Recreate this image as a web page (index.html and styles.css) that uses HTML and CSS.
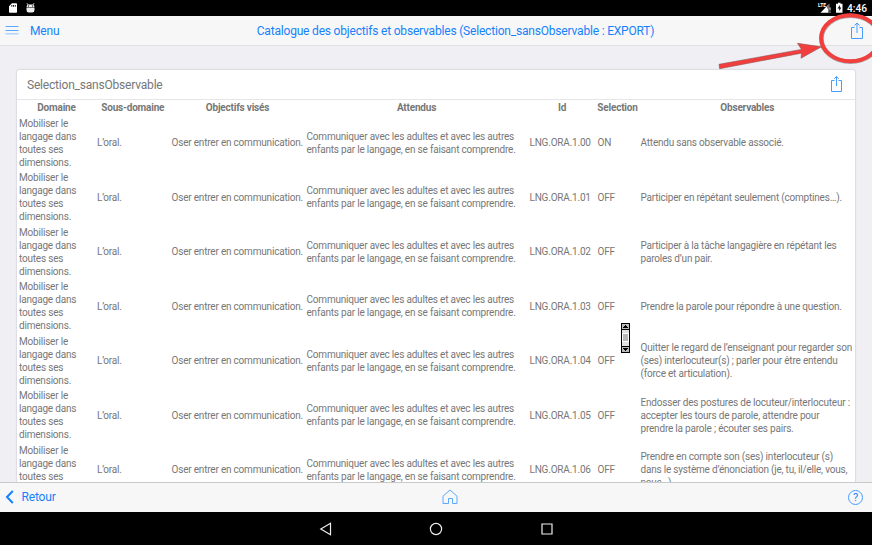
FILE: index.html
```
<!DOCTYPE html>
<html lang="fr">
<head>
<meta charset="utf-8">
<title>Catalogue des objectifs et observables</title>
<link rel="stylesheet" href="styles.css">
</head>
<body>
<div class="screen">
  <div class="status">
    <svg class="status-left" width="40" height="16" viewBox="0 0 40 16"><path fill="#fff" fill-rule="evenodd" d="M12 3.3h4.2q.8 0 .8.8v7.8q0 .8-.8.8H9.800q-.8 0-.8-.8V6.300zM11.400 5v1.800h.9V5zm1.700 0v1.800h.9V5zm1.700 0v1.800h.9V5z"/><path fill="#eee" fill-rule="evenodd" d="M27 3l1.400 1.400h4.200L34 3l.5.5-1.200 1.300q1.200.8 1.200 2.700h-8q0-1.900 1.200-2.700l-1.200-1.300zM28 5.500v1h1v-1zm4 0v1h1v-1zM26.500 8h8v2q0 2.500-2.300 2.500h-3.400q-2.300 0-2.300-2.500z"/></svg>
    <span class="lte">LTE</span>
    <svg class="status-right" width="24" height="16" viewBox="0 0 24 16"><path fill="#fff" d="M8.500 4.500V12.700H.5z"/><path fill="#777" d="M9.500 3.500v5H7v-2.500z"/><path stroke="#fff" d="M10 7.500v3m0 1v1.200"/><path fill="#fff" d="M16 3.800h2V2.700h2.500v1.100h2v8.900H16z"/><path fill="#000" d="M20 5l-2.500 3.500h1.800V11l2-3.400h-1.500z"/></svg>
    <span class="clock">4:46</span>
  </div>
  <header class="navbar">
    <svg class="menu-icon" width="14" height="10" viewBox="0 0 14 10"><path stroke="#5baaff" stroke-width="1" d="M.5 1.500h13M.5 5.500h13"/><path stroke="#a5d0ff" stroke-width="1.300" d="M.5 8.800h13"/></svg>
    <a class="menu">Menu</a>
    <h1 class="title">Catalogue des objectifs et observables (Selection_sansObservable : EXPORT)</h1>
    <svg class="share" width="14" height="18" viewBox="0 0 14 18"><path d="M4.500 5.500h-3v11h11v-11h-3M7 11V1M4.500 3.500L7 1l2.500 2.500"/></svg>
  </header>
  <main class="content">
    <section class="card">
      <div class="card-head"><h2>Selection_sansObservable</h2>
        <svg class="share share-card" width="14" height="18" viewBox="0 0 14 18"><path d="M4.500 5.500h-3v11h10v-11h-3M6.500 11V1.500M4.300 3.700L6.500 1.500l2.200 2.200"/></svg>
      </div>
      <div class="table">
        <div class="row head"><b class="c1">Domaine</b><b class="c2">Sous-domaine</b><b class="c3">Objectifs visés</b><b class="c4">Attendus</b><b class="c5">Id</b><b class="c6">Selection</b><b class="c7">Observables</b></div>
        <div class="row"><p class="c1">Mobiliser le<br>langage dans<br>toutes ses<br>dimensions.</p><p class="c2">L’oral.</p><p class="c3">Oser entrer en communication.</p><p class="c4">Communiquer avec les adultes et avec les autres<br>enfants par le langage, en se faisant comprendre.</p><p class="c5">LNG.ORA.1.00</p><p class="c6">ON</p><p class="c7">Attendu sans observable associé.</p></div>
        <div class="row"><p class="c1">Mobiliser le<br>langage dans<br>toutes ses<br>dimensions.</p><p class="c2">L’oral.</p><p class="c3">Oser entrer en communication.</p><p class="c4">Communiquer avec les adultes et avec les autres<br>enfants par le langage, en se faisant comprendre.</p><p class="c5">LNG.ORA.1.01</p><p class="c6">OFF</p><p class="c7">Participer en répétant seulement (comptines…).</p></div>
        <div class="row"><p class="c1">Mobiliser le<br>langage dans<br>toutes ses<br>dimensions.</p><p class="c2">L’oral.</p><p class="c3">Oser entrer en communication.</p><p class="c4">Communiquer avec les adultes et avec les autres<br>enfants par le langage, en se faisant comprendre.</p><p class="c5">LNG.ORA.1.02</p><p class="c6">OFF</p><p class="c7">Participer à la tâche langagière en répétant les<br>paroles d’un pair.</p></div>
        <div class="row"><p class="c1">Mobiliser le<br>langage dans<br>toutes ses<br>dimensions.</p><p class="c2">L’oral.</p><p class="c3">Oser entrer en communication.</p><p class="c4">Communiquer avec les adultes et avec les autres<br>enfants par le langage, en se faisant comprendre.</p><p class="c5">LNG.ORA.1.03</p><p class="c6">OFF</p><p class="c7">Prendre la parole pour répondre à une question.</p></div>
        <div class="row"><p class="c1">Mobiliser le<br>langage dans<br>toutes ses<br>dimensions.</p><p class="c2">L’oral.</p><p class="c3">Oser entrer en communication.</p><p class="c4">Communiquer avec les adultes et avec les autres<br>enfants par le langage, en se faisant comprendre.</p><p class="c5">LNG.ORA.1.04</p><p class="c6">OFF</p><p class="c7">Quitter le regard de l’enseignant pour regarder son<br>(ses) interlocuteur(s) ; parler pour être entendu<br>(force et articulation).</p></div>
        <div class="row"><p class="c1">Mobiliser le<br>langage dans<br>toutes ses<br>dimensions.</p><p class="c2">L’oral.</p><p class="c3">Oser entrer en communication.</p><p class="c4">Communiquer avec les adultes et avec les autres<br>enfants par le langage, en se faisant comprendre.</p><p class="c5">LNG.ORA.1.05</p><p class="c6">OFF</p><p class="c7">Endosser des postures de locuteur/interlocuteur :<br>accepter les tours de parole, attendre pour<br>prendre la parole ; écouter ses pairs.</p></div>
        <div class="row"><p class="c1">Mobiliser le<br>langage dans<br>toutes ses<br>dimensions.</p><p class="c2">L’oral.</p><p class="c3">Oser entrer en communication.</p><p class="c4">Communiquer avec les adultes et avec les autres<br>enfants par le langage, en se faisant comprendre.</p><p class="c5">LNG.ORA.1.06</p><p class="c6">OFF</p><p class="c7">Prendre en compte son (ses) interlocuteur (s)<br>dans le système d’énonciation (je, tu, il/elle, vous,<br>nous…).</p></div>
      </div>
    </section>
  </main>
  <footer class="toolbar">
    <div class="back"><svg width="10" height="14" viewBox="0 0 10 14"><path fill="none" stroke="#1680fb" stroke-width="2" d="M7.800 1L2 7l5.800 6"/></svg><span>Retour</span></div>
    <svg class="home" width="16" height="16" viewBox="0 0 16 16"><path fill="none" stroke="#5baaff" d="M1 14.500V7.200L8 1l7 6.200v7.300h-4.500V9.500h-4v5z"/></svg>
    <span class="help">?</span>
  </footer>
  <nav class="android">
    <svg width="14" height="14" viewBox="0 0 14 14"><path d="M11.500 1.300v11.400L1.800 7z"/></svg>
    <svg width="14" height="14" viewBox="0 0 14 14"><circle cx="7" cy="7" r="5.600"/></svg>
    <svg width="14" height="14" viewBox="0 0 14 14"><path d="M2 2h10v10H2z"/></svg>
  </nav>
  <svg class="scroller" width="9" height="30" viewBox="0 0 9 30" shape-rendering="crispEdges"><path d="M0 0h9v30H0z"/><path fill="#bbb" d="M1 1h7v5H1zM1 24h7v5H1z"/><path fill="#e2e2e2" d="M1 7h7v16H1z"/><path fill="#fff" d="M1 10h7v9H1z"/><path fill="#b8b8b8" d="M2 11h5v7H2z"/><path d="M4 2h1v1h1v1h1v1H2V4h1V3h1zM2 25h5v1H6v1H5v1H4v-1H3v-1H2z"/></svg>
  <svg class="annotation" width="162" height="70" viewBox="0 0 162 70"><ellipse cx="140.500" cy="38.700" rx="29" ry="23" fill="none" stroke="#777" stroke-width="4.600" opacity=".6"/><ellipse cx="140.300" cy="38.200" rx="29.200" ry="23" fill="none" stroke="#f23f3d" stroke-width="4"/><path fill="#f23f3d" stroke="#8d5555" stroke-width=".6" d="M9 64.300L91.500 49.400 87.500 43.300 111.500 46.800 91 58.200 91.500 53.200 9.600 68.700z"/></svg>
</div>
</body>
</html>
```
FILE: styles.css
```
* { box-sizing: border-box; }
body { margin: 0; font-family: Roboto, sans-serif; color: #777; }
h1, h2, p { margin: 0; font-weight: 400; }
.screen { position: relative; width: 872px; height: 545px; overflow: hidden; display: flex; flex-direction: column; background: #efeff4; }
.status { height: 16px; flex: none; background: #000; display: flex; align-items: flex-start; color: #fff; }
.status-left { flex: none; }
.lte { margin-left: auto; width: 2px; font-size: 5px; line-height: 5px; padding-top: 3px; font-weight: 700; }
.status-right { flex: none; margin-right: 3px; }
.clock { flex: none; font-size: 10.2px; line-height: 17px; font-weight: 500; width: 25px; white-space: nowrap; }
.navbar { height: 30px; flex: none; display: flex; align-items: center; background: #f7f7f8; border-bottom: 1.5px solid #e0e0e2; color: #1681fb; padding: 0 8px 0 5px; }
.menu-icon { margin-top: -1px; }
.menu { margin-left: 11px; font-size: 12px; letter-spacing: -.15px; width: 32px; padding-top: 1px; }
.title { flex: 1; text-align: center; font-size: 12px; letter-spacing: -.19px; white-space: nowrap; padding-right: 1px; }
.share { fill: none; stroke: #469dff; stroke-width: 1; flex: none; }
.share-card { margin-top: -2px; margin-right: -1px; }
.content { flex: 1; min-height: 0; overflow: hidden; padding: 24px 17px 0; }
.card { background: #fff; height: 460px; border-radius: 2px; box-shadow: 0 0 2px #aaaab2; }
.card-head { height: 30px; display: flex; align-items: center; justify-content: space-between; padding: 0 12px 0 10px; border-bottom: 1px solid #e6e6e6; }
.card-head h2 { font-size: 12px; letter-spacing: -.2px; }
.row { display: grid; grid-template-columns: 78px 74.5px 135px 223px 68px 43px 216.5px; height: 54.5px; align-items: center; font-size: 10px; letter-spacing: -.2px; line-height: 13px; white-space: nowrap; }
.row p { padding-left: 2px; }
.row.head { height: 15.6px; text-align: center; padding-left: .5px; }
.toolbar { height: 30px; flex: none; background: #f7f7f8; border-top: 1px solid #c9c9cc; display: grid; grid-template-columns: 437px 16px 1fr; align-items: center; padding: 0 9px 1px 5px; color: #1681fb; }
.back { display: flex; align-items: center; gap: 6.5px; font-size: 12px; letter-spacing: -.15px; }
.home { margin-top: -1px; }
.help { justify-self: end; width: 15px; height: 15px; border: 1px solid #469dff; border-radius: 50%; font-size: 11px; line-height: 13px; text-align: center; }
.android { height: 33px; flex: none; background: #000; display: flex; align-items: center; justify-content: center; gap: 96.5px; }
.android svg { fill: none; stroke: #eee; stroke-width: 1.2; }
.scroller { position: absolute; left: 621px; top: 323px; }
.annotation { position: absolute; left: 710px; top: 0; }
```
